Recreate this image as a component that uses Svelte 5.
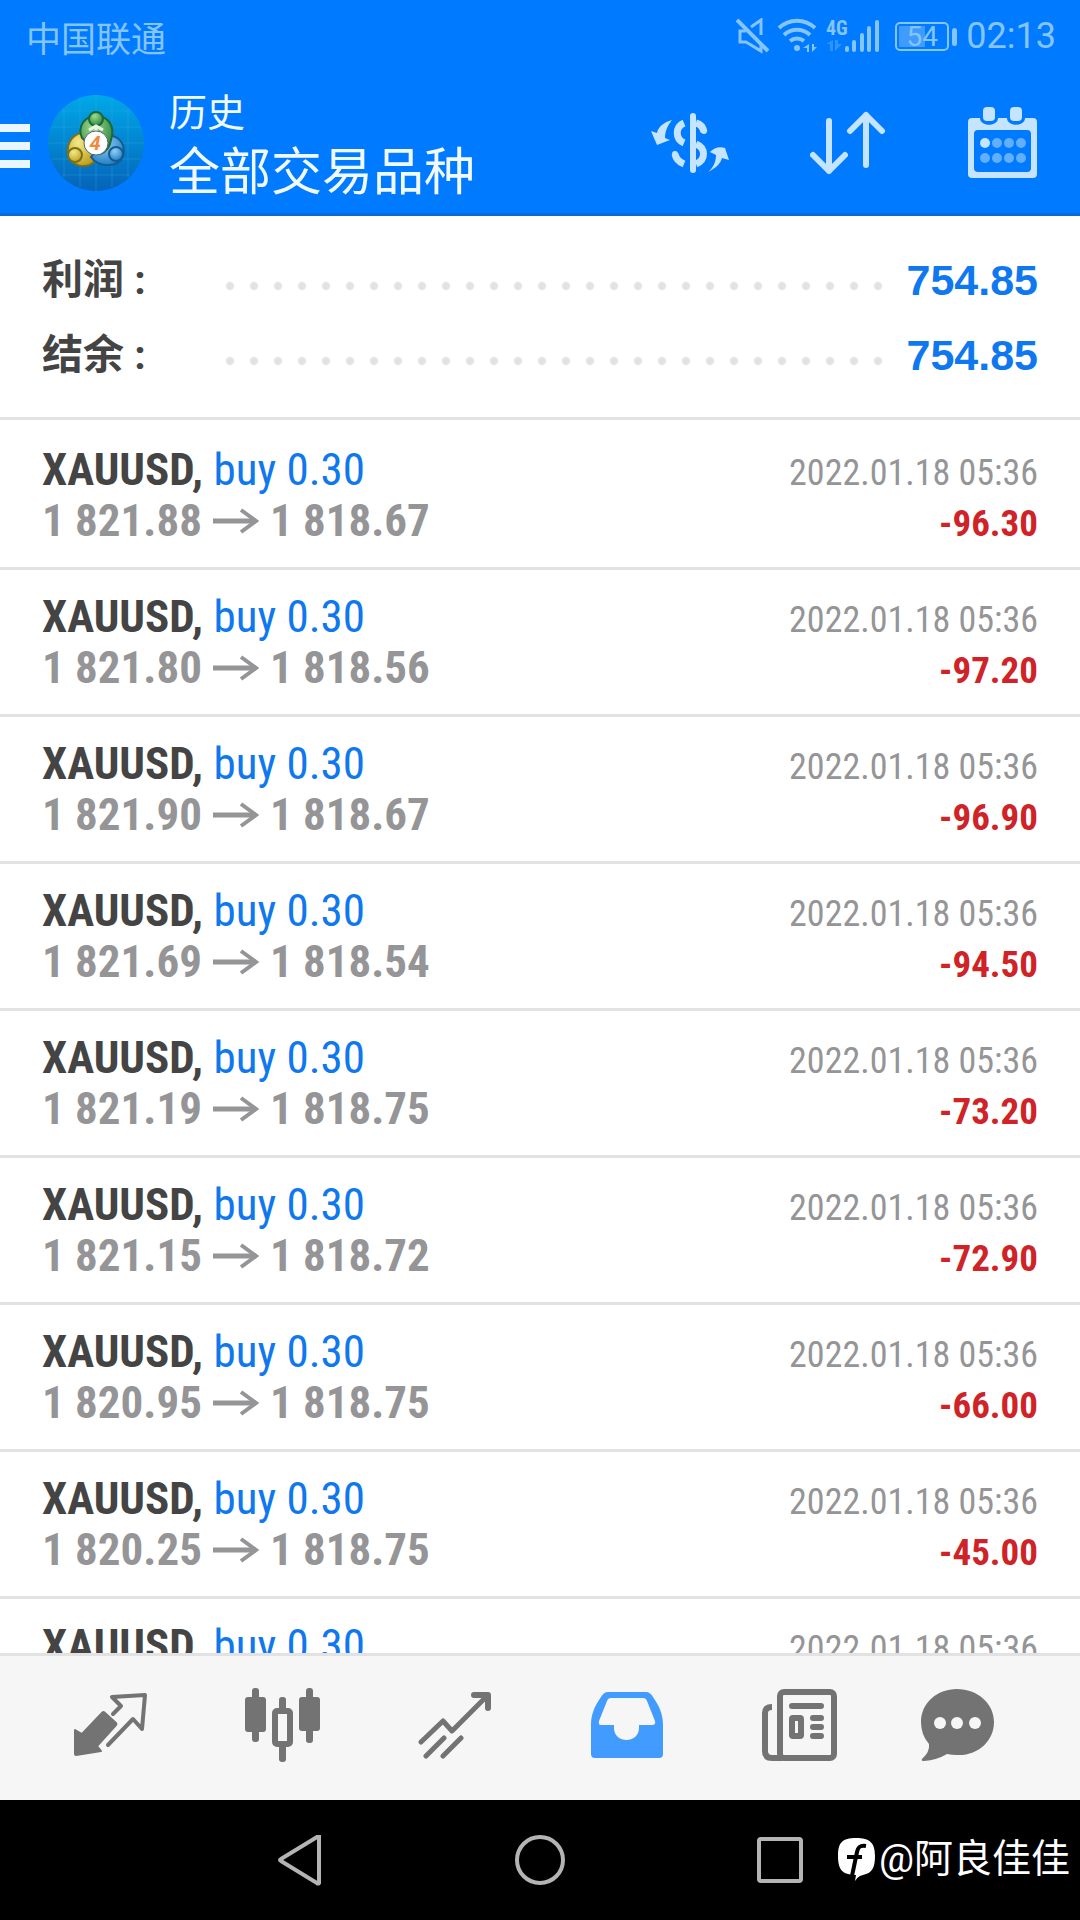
<script lang="ts">
	const summary = [
		{ label: '利润 :', value: '754.85' },
		{ label: '结余 :', value: '754.85' }
	];

	const deals = [
		{ open: '1 821.88', close: '1 818.67', profit: '-96.30' },
		{ open: '1 821.80', close: '1 818.56', profit: '-97.20' },
		{ open: '1 821.90', close: '1 818.67', profit: '-96.90' },
		{ open: '1 821.69', close: '1 818.54', profit: '-94.50' },
		{ open: '1 821.19', close: '1 818.75', profit: '-73.20' },
		{ open: '1 821.15', close: '1 818.72', profit: '-72.90' },
		{ open: '1 820.95', close: '1 818.75', profit: '-66.00' },
		{ open: '1 820.25', close: '1 818.75', profit: '-45.00' },
		{ open: '', close: '', profit: '' }
	];
</script>

<div class="screen">
	<header class="top">
		<div class="status">
			<span class="carrier">中国联通</span>
			<div class="indicators">
				<svg width="34" height="36" viewBox="0 0 34 36" fill="none" stroke="currentColor" stroke-width="3">
					<path d="M10 13H4v11h6l15 9v-8M15 9l10-7v15" />
					<path d="M1 2l31 31" stroke-width="4" />
				</svg>
				<svg width="42" height="36" viewBox="0 0 42 36" fill="none" stroke="currentColor" stroke-width="4">
					<path d="M2 10a26 26 0 0 1 36 0M7 17a19 19 0 0 1 26 0M13 23a11 11 0 0 1 14 0" />
					<circle cx="20" cy="30" r="3" fill="currentColor" stroke="none" />
					<path d="M32 26v8h-2v-4h-4zM35 26v8l5-5h-3v-3z" fill="currentColor" stroke="none" />
				</svg>
				<svg width="54" height="36" viewBox="0 0 54 36">
					<text x="0" y="17" class="net">4G</text>
					<g opacity="0.35" fill="currentColor">
						<path d="M7 22v11H4v-7H0zM9 22v11l7-7h-4v-4z" />
					</g>
					<g stroke="currentColor" stroke-width="4" stroke-linecap="round">
						<path d="M21 30v2M28 24v8M36 17v15M43 10v22M51 4v28" />
					</g>
				</svg>
				<div class="battery"><span>54</span></div>
				<span class="clock">02:13</span>
			</div>
		</div>

		<div class="bar">
			<button class="menu" aria-label="menu"><i></i><i></i><i></i></button>
			<svg class="logo" width="96" height="96" viewBox="0 0 96 96">
				<defs>
					<linearGradient id="sky" x1="0" y1="0" x2="0" y2="1">
						<stop offset="0" stop-color="#00a8e8" />
						<stop offset="1" stop-color="#0663b8" />
					</linearGradient>
					<radialGradient id="green" cx="0.4" cy="0.3" r="0.8">
						<stop offset="0" stop-color="#9fdc8c" />
						<stop offset="1" stop-color="#1c7a38" />
					</radialGradient>
					<radialGradient id="gold" cx="0.4" cy="0.3" r="0.8">
						<stop offset="0" stop-color="#f4ea8a" />
						<stop offset="1" stop-color="#b89a12" />
					</radialGradient>
					<radialGradient id="blue" cx="0.4" cy="0.3" r="0.8">
						<stop offset="0" stop-color="#8fd0f6" />
						<stop offset="1" stop-color="#1474bd" />
					</radialGradient>
				</defs>
				<circle cx="48" cy="48" r="48" fill="url(#sky)" />
				<path d="M16 14v68M32 4v88M48 0v96M64 4v88M80 14v68M14 16h68M4 32h88M0 48h96M4 64h88M14 80h68" stroke="#35b4e6" stroke-opacity="0.3" />
				<g stroke-width="2">
					<path d="M40 38c-14-2-22 9-20 22 4 12 18 14 26 7z" fill="url(#gold)" stroke="#7c7018" />
					<path d="M60 40c12 1 18 10 15 21-5 12-24 12-32 1z" fill="url(#blue)" stroke="#155a90" />
					<path d="M34 43c-5-12 3-22 14-22s20 9 15 24c-1 8-5 12-11 14z" fill="url(#green)" stroke="#1c6838" />
					<circle cx="48" cy="24" r="7" fill="url(#green)" stroke="#1c6838" />
					<circle cx="27" cy="60" r="7" fill="url(#gold)" stroke="#7c7018" />
					<circle cx="68" cy="59" r="7" fill="url(#blue)" stroke="#155a90" />
				</g>
				<path d="M41 35l7-4 7 4M48 31v8" stroke="#e6f5e2" stroke-width="3" fill="none" />
				<circle cx="48" cy="48" r="12" fill="#fff" stroke="#567" />
				<text x="47" y="55" class="four" text-anchor="middle">4</text>
			</svg>
			<div class="titles">
				<h1>历史</h1>
				<p>全部交易品种</p>
			</div>
			<div class="tools">
				<button aria-label="currency">
					<svg width="80" height="64" viewBox="0 0 80 64" fill="none" stroke="currentColor" stroke-width="7">
						<path d="M43 5v54" stroke-width="6" stroke-linecap="round" />
						<path d="M34 12c-9 4-9 16 0 20M46 12c4 1 7 4 8 9M46 33c10 4 10 16 0 20" />
						<path d="M25 43c1 5 4 8 9 10" />
						<circle cx="25" cy="43" r="3" fill="currentColor" stroke="none" />
						<circle cx="54" cy="20" r="3" fill="currentColor" stroke="none" />
						<path d="M22 9c-8 2-14 7-15 13l-6-2 6 14 13-5-5-2c0-7 3-13 7-18zM58 61c8-4 13-9 14-14l7 2-4-12c-6-2-11 0-15 4l6 3c0 7-3 13-8 17z" fill="currentColor" stroke="none" />
					</svg>
				</button>
				<button aria-label="sort">
					<svg width="78" height="64" viewBox="0 0 78 64" fill="none" stroke="currentColor" stroke-width="6" stroke-linecap="round" stroke-linejoin="round">
						<path d="M19 10v50M3 44l16 16 16-16M56 54V4M40 20L56 4l16 16" />
					</svg>
				</button>
				<button aria-label="calendar">
					<svg width="70" height="72" viewBox="0 0 70 72" fill="currentColor">
						<path fill-rule="evenodd" d="M4 11h8c0 9 18 9 18 0h9c0 9 18 9 18 0h8q4 0 4 4v52q0 4-4 4H4q-4 0-4-4V15q0-4 4-4zM10 23q-4 0-4 4v34q0 4 4 4h49q4 0 4-4V27q0-4-4-4z" />
						<rect x="15" y="0" width="12" height="14" rx="4" />
						<rect x="42" y="0" width="12" height="14" rx="4" />
						<circle cx="17" cy="36" r="5" />
						<g opacity="0.5">
							<circle cx="29" cy="36" r="5" />
							<circle cx="41" cy="36" r="5" />
							<circle cx="53" cy="36" r="5" />
							<circle cx="17" cy="51" r="5" />
							<circle cx="29" cy="51" r="5" />
							<circle cx="41" cy="51" r="5" />
							<circle cx="53" cy="51" r="5" />
						</g>
					</svg>
				</button>
			</div>
		</div>
	</header>

	<section class="summary">
		{#each summary as row}
			<div class="summary-row">
				<span class="label">{row.label}</span>
				<span class="dots"></span>
				<span class="value">{row.value}</span>
			</div>
		{/each}
	</section>

	<main class="deals">
		{#each deals as deal}
			<div class="deal">
				<div class="line">
					<span class="symbol">XAUUSD, <span class="side">buy 0.30</span></span>
					<time>2022.01.18 05:36</time>
				</div>
				{#if deal.open}
					<div class="line">
						<span class="prices">
							<span>{deal.open}</span>
							<svg width="46" height="26" viewBox="0 0 46 26" fill="none" stroke="currentColor" stroke-width="4">
								<path d="M0 13h43" stroke-width="5" />
								<path d="M28 2l15 11-15 11" />
							</svg>
							<span>{deal.close}</span>
						</span>
						<span class="profit">{deal.profit}</span>
					</div>
				{/if}
			</div>
		{/each}
	</main>

	<nav class="tabs">
		<button aria-label="quotes">
			<svg width="74" height="66" viewBox="0 0 74 66" fill="none" stroke="currentColor" stroke-width="4" stroke-linejoin="round" stroke-linecap="round">
				<path d="M28 21q1-2 3 0l11 10q1 1 0 2L23 54l4 5-25 4q-1 0-1-1V38l7 4z" fill="currentColor" stroke-width="2" />
				<path d="M39 22l8-8-9-9 33-2-3 34-9-10-25 26" />
			</svg>
		</button>
		<button aria-label="charts">
			<svg width="76" height="76" viewBox="0 0 76 76" fill="currentColor">
				<rect x="0" y="10" width="21" height="35" rx="3" />
				<rect x="7" y="1" width="7" height="54" rx="3" />
				<rect x="54" y="10" width="21" height="34" rx="3" />
				<rect x="61" y="1" width="7" height="55" rx="3" />
				<rect x="34" y="10" width="7" height="14" rx="3" />
				<rect x="34" y="56" width="7" height="19" rx="3" />
				<rect x="30" y="24" width="15" height="33" rx="2" fill="none" stroke="currentColor" stroke-width="6" />
			</svg>
		</button>
		<button aria-label="trade">
			<svg width="74" height="68" viewBox="0 0 74 68" fill="none" stroke="currentColor" stroke-width="5" stroke-linecap="round" stroke-linejoin="round">
				<path d="M3 51l22-21 9 10L69 5M8 65l18-18M25 65l18-18" />
				<path d="M56 4h14v13" stroke-width="6" />
			</svg>
		</button>
		<button class="active" aria-label="history">
			<svg width="72" height="66" viewBox="0 0 72 66" fill="currentColor">
				<path fill-rule="evenodd" d="M17 0h38q4 0 7 5c7 10 10 18 10 28v29q0 4-4 4H4q-4 0-4-4V33C0 23 3 15 10 5q3-5 7-5zM20 6q-3 0-4 3L8 29q-1 4 2 4h13v3c0 16 25 16 25 0v-3h13q4 0 3-4L56 9q-1-3-4-3z" />
			</svg>
		</button>
		<button aria-label="news">
			<svg width="76" height="72" viewBox="0 0 76 72" fill="none" stroke="currentColor" stroke-width="6">
				<rect x="19" y="3" width="54" height="66" rx="4" />
				<path d="M11 18q-7 0-7 6v38q0 7 7 7h11" />
				<path d="M31 17h29M52 29h8M52 38h8M52 47h8" stroke-linecap="round" />
				<rect x="31" y="29" width="9" height="18" rx="1" />
			</svg>
		</button>
		<button aria-label="messages">
			<svg width="73" height="72" viewBox="0 0 73 72">
				<path d="M36 0c20 0 37 14 37 33S57 67 36 66q-5 0-10-1-10 6-23 7-3 0-2-2 8-7 7-15Q0 46 0 33C0 14 16 0 36 0z" fill="currentColor" />
				<circle cx="19" cy="34" r="6" fill="#f6f6f6" />
				<circle cx="36" cy="34" r="6" fill="#f6f6f6" />
				<circle cx="54" cy="34" r="6" fill="#f6f6f6" />
			</svg>
		</button>
	</nav>

	<footer class="system">
		<button aria-label="back">
			<svg width="50" height="52" viewBox="0 0 50 52"><path d="M44 3v46q-1 1-2 0L6 27q-2-1 0-2L42 3z" /></svg>
		</button>
		<button aria-label="home">
			<svg width="52" height="52" viewBox="0 0 52 52"><circle cx="26" cy="26" r="23" /></svg>
		</button>
		<button aria-label="recent">
			<svg width="52" height="52" viewBox="0 0 52 52"><rect x="5" y="5" width="42" height="42" rx="2" /></svg>
		</button>
		<div class="watermark">
			<svg width="37" height="43" viewBox="0 0 37 43">
				<path d="M18 0c14 0 19 5 19 18 0 12-3 17-12 19-4 1-5 2-8 6l1-6C4 37 0 31 0 18 0 5 4 0 18 0z" fill="#fff" />
				<path d="M28 8c-6-1-8 1-9 6l-5 24M9 19h15" fill="none" stroke="#000" stroke-width="4" />
			</svg>
			<span>@阿良佳佳</span>
		</div>
	</footer>
</div>

<style>
	:global(body) {
		background: #000;
	}

	.screen {
		display: flex;
		flex-direction: column;
		height: 100vh;
		overflow: hidden;
		background: #fff;
		font-family: Roboto, 'Noto Sans CJK SC', sans-serif;
	}

	button {
		display: flex;
		align-items: center;
		justify-content: center;
		padding: 0;
		border: 0;
		background: none;
		color: inherit;
	}

	svg {
		display: block;
		flex: none;
	}

	.top {
		flex: none;
		background: #007aff;
		border-bottom: 3px solid #0f69d8;
		color: #c4e4ff;
	}

	.status {
		display: flex;
		align-items: center;
		justify-content: space-between;
		height: 72px;
		padding: 0 24px 0 26px;
		color: #84c4ff;
	}

	.carrier {
		font-size: 35px;
	}

	.indicators {
		display: flex;
		align-items: center;
		gap: 7px;
	}

	.net {
		font: 700 20px 'Roboto Condensed', sans-serif;
		fill: currentColor;
	}

	.battery {
		position: relative;
		box-sizing: border-box;
		width: 54px;
		height: 29px;
		margin: 0 10px 0 8px;
		border: 2px solid currentColor;
		border-radius: 5px;
		background: linear-gradient(90deg, #3f9cfd 56%, transparent 56%) content-box;
		padding: 2px;
		font-size: 28px;
		line-height: 22px;
		text-align: center;
	}

	.battery::after {
		content: '';
		position: absolute;
		top: 4px;
		right: -10px;
		width: 5px;
		height: 18px;
		border-radius: 3px;
		background: currentColor;
	}

	.clock {
		font-size: 36px;
	}

	.bar {
		display: flex;
		align-items: center;
		height: 141px;
		padding-right: 42px;
	}

	.menu {
		flex-direction: column;
		gap: 10px;
		width: 30px;
		padding-top: 6px;
	}

	.menu i {
		width: 100%;
		height: 8px;
		background: #eaf6ff;
	}

	.logo {
		margin: 0 25px 0 18px;
	}

	.four {
		font: italic 700 20px Roboto, sans-serif;
		fill: #f08a3c;
	}

	.titles {
		flex: 1;
		padding-top: 4px;
		color: #f0f9ff;
	}

	h1 {
		margin: 0;
		font-size: 38px;
		font-weight: 400;
		line-height: 56px;
	}

	.titles p {
		margin: 0;
		font-size: 51px;
		line-height: 64px;
	}

	.tools {
		display: flex;
		align-items: center;
		gap: 80px;
	}

	.summary {
		flex: none;
		padding: 26px 42px 25px;
		border-bottom: 3px solid #e2e2e2;
	}

	.summary-row {
		display: flex;
		align-items: center;
		height: 75px;
		font-weight: 700;
		line-height: 40px;
	}

	.label {
		width: 176px;
		color: #444;
		font-size: 41px;
	}

	.dots {
		flex: 1;
		height: 36px;
		margin-right: 16px;
		background: radial-gradient(circle, #e2e2e2 3px, transparent 5px) 0 12px / 24px 24px repeat-x;
	}

	.value {
		color: #0f78ee;
		font-family: 'Liberation Sans', sans-serif;
		font-size: 43px;
	}

	.deals {
		flex: 1;
		min-height: 0;
		overflow: hidden;
		padding-top: 3px;
		font-family: 'Roboto Condensed', Roboto, sans-serif;
	}

	.deal {
		padding: 21px 42px;
		border-bottom: 3px solid #e2e2e2;
	}

	.line {
		display: flex;
		align-items: baseline;
		justify-content: space-between;
		height: 51px;
		line-height: 51px;
	}

	.symbol {
		color: #444;
		font-size: 45px;
		font-weight: 700;
	}

	.side {
		color: #0f78ee;
		font-weight: 400;
	}

	.prices {
		display: flex;
		align-items: center;
		gap: 11px;
		color: #959597;
		font-size: 45px;
		font-weight: 700;
	}

	time {
		color: #959597;
		font-size: 36px;
	}

	.profit {
		color: #cf2327;
		font-size: 37px;
		font-weight: 700;
	}

	.tabs {
		display: grid;
		flex: none;
		grid-template-columns: repeat(5, 43fr) 36fr;
		box-sizing: border-box;
		height: 147px;
		padding: 0 51px 6px 25px;
		border-top: 3px solid #e2e2e2;
		background: #f6f6f6;
		color: #737373;
	}

	.active {
		color: #429bff;
	}

	.system {
		position: relative;
		display: flex;
		flex: none;
		justify-content: center;
		gap: 188px;
		height: 120px;
		background: #000;
	}

	.system button {
		width: 52px;
	}

	.system button svg {
		fill: none;
		stroke: #b4b4b4;
		stroke-width: 4;
	}

	.watermark {
		position: absolute;
		top: 31px;
		right: 10px;
		display: flex;
		align-items: center;
		gap: 4px;
		color: #fff;
		font-size: 39px;
		line-height: 56px;
	}
</style>
